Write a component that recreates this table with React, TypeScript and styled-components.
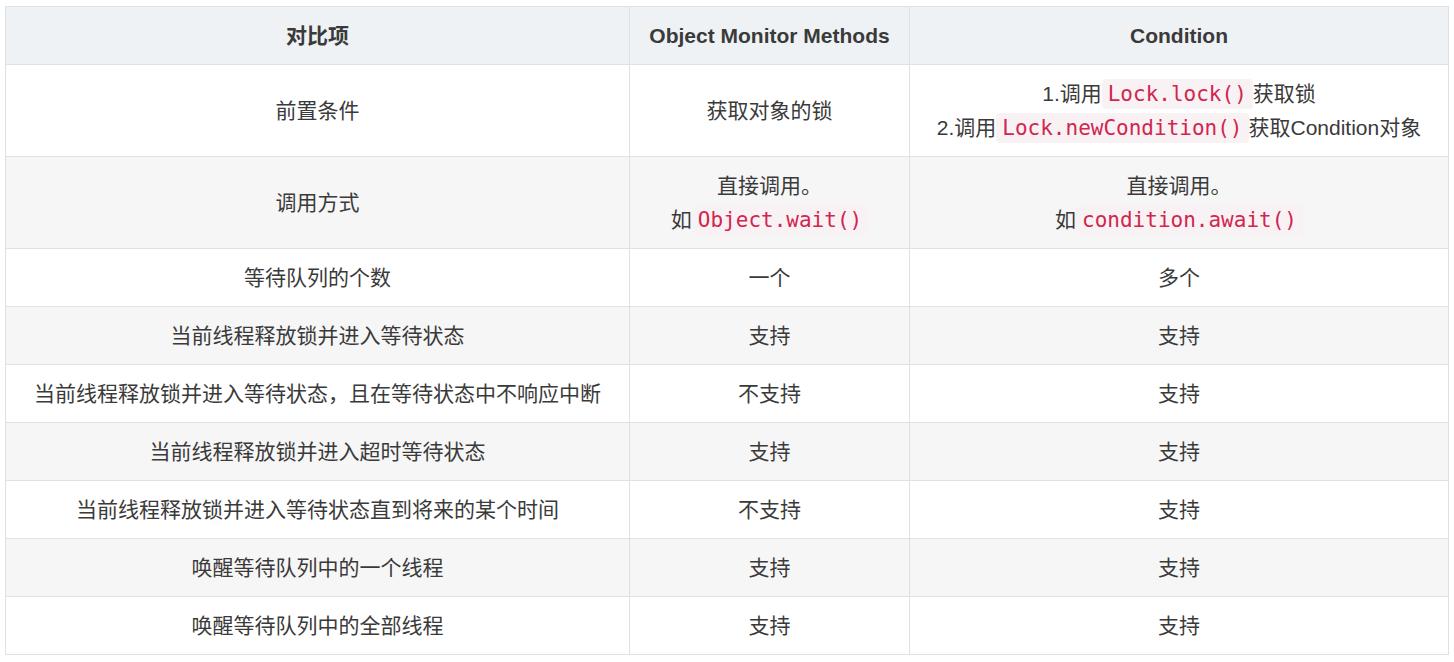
import React from 'react';
import styled, { createGlobalStyle } from 'styled-components';

const GlobalStyle = createGlobalStyle`
  html, body {
    margin: 0;
    padding: 0;
    background: #ffffff;
  }
`;

const Page = styled.div`
  padding: 6px 0 0 5px;
`;

const Table = styled.table`
  width: 1443px;
  border-collapse: collapse;
  table-layout: fixed;
  font-family: 'Liberation Sans', 'Noto Sans CJK SC', sans-serif;
  font-size: 21px;
  color: #333333;
`;

const HeadCell = styled.th`
  background: #eef2f5;
  border: 1px solid #dfe2e5;
  padding: 12px 12px 11px;
  line-height: 34px;
  font-weight: bold;
  text-align: center;
  color: #3a3a3a;
`;

const BodyRow = styled.tr`
  background: #ffffff;

  &:nth-child(even) {
    background: #f6f6f6;
  }
`;

const Cell = styled.td`
  border: 1px solid #dfe2e5;
  padding: 12px 12px 11px;
  line-height: 34px;
  text-align: center;
  color: #3a3a3a;
`;

const Code = styled.code`
  font-family: 'DejaVu Sans Mono', 'Liberation Mono', monospace;
  font-size: 21px;
  line-height: 24px;
  color: #d0264f;
  background: #f9f2f4;
  padding: 3px 6px;
  border-radius: 4px;
`;

type Row = {
  item: React.ReactNode;
  monitor: React.ReactNode;
  condition: React.ReactNode;
};

const rows: Row[] = [
  {
    item: '前置条件',
    monitor: '获取对象的锁',
    condition: (
      <>
        1.调用<Code>Lock.lock()</Code>获取锁
        <br />
        2.调用<Code>Lock.newCondition()</Code>获取Condition对象
      </>
    ),
  },
  {
    item: '调用方式',
    monitor: (
      <>
        直接调用。
        <br />
        如<Code>Object.wait()</Code>
      </>
    ),
    condition: (
      <>
        直接调用。
        <br />
        如<Code>condition.await()</Code>
      </>
    ),
  },
  { item: '等待队列的个数', monitor: '一个', condition: '多个' },
  { item: '当前线程释放锁并进入等待状态', monitor: '支持', condition: '支持' },
  { item: '当前线程释放锁并进入等待状态，且在等待状态中不响应中断', monitor: '不支持', condition: '支持' },
  { item: '当前线程释放锁并进入超时等待状态', monitor: '支持', condition: '支持' },
  { item: '当前线程释放锁并进入等待状态直到将来的某个时间', monitor: '不支持', condition: '支持' },
  { item: '唤醒等待队列中的一个线程', monitor: '支持', condition: '支持' },
  { item: '唤醒等待队列中的全部线程', monitor: '支持', condition: '支持' },
];

export default function App() {
  return (
    <Page>
      <GlobalStyle />
      <Table>
        <colgroup>
          <col style={{ width: 624 }} />
          <col style={{ width: 280 }} />
          <col style={{ width: 539 }} />
        </colgroup>
        <thead>
          <tr>
            <HeadCell>对比项</HeadCell>
            <HeadCell>Object Monitor Methods</HeadCell>
            <HeadCell>Condition</HeadCell>
          </tr>
        </thead>
        <tbody>
          {rows.map((row, i) => (
            <BodyRow key={i}>
              <Cell>{row.item}</Cell>
              <Cell>{row.monitor}</Cell>
              <Cell>{row.condition}</Cell>
            </BodyRow>
          ))}
        </tbody>
      </Table>
    </Page>
  );
}
